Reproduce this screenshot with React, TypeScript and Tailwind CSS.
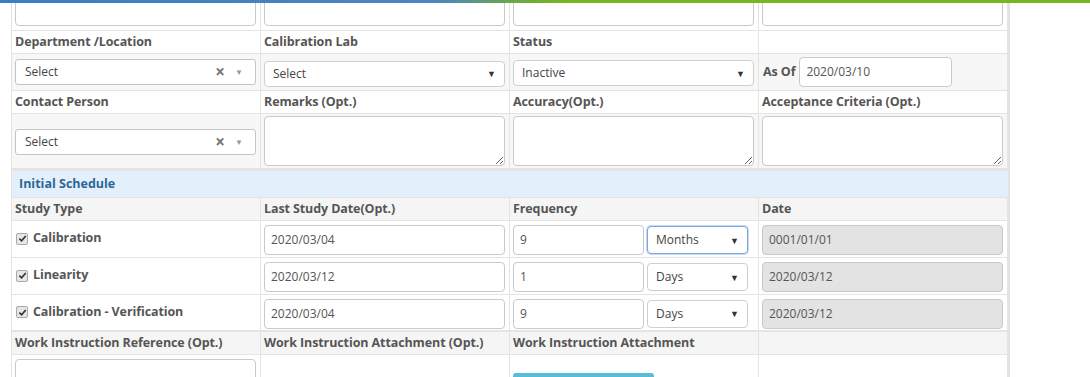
import React from 'react';

const Caret = () => <span className="text-[9px] text-[#333] leading-none">▼</span>;

const TextInput = ({ value = '', disabled = false, className = '' }: { value?: string; disabled?: boolean; className?: string }) => (
  <div
    className={`flex items-center h-[30px] px-[6px] rounded-[4px] border border-[#c9c9c9] text-[12px] text-[#555] ${
      disabled ? 'bg-[#e3e3e3]' : 'bg-white'
    } ${className}`}
  >
    {value}
  </div>
);

const NativeSelect = ({ value, focused = false, className = '' }: { value: string; focused?: boolean; className?: string }) => (
  <div
    className={`flex items-center justify-between h-[26px] pl-[8px] pr-[8px] rounded-[4px] bg-white text-[12px] text-[#444] border ${
      focused ? 'border-[#7aa6dc] shadow-[0_0_0_1px_#c7daf2]' : 'border-[#cfcfcf]'
    } ${className}`}
  >
    <span>{value}</span>
    <Caret />
  </div>
);

const Select2 = () => (
  <div className="flex items-center h-[26px] pl-[9px] pr-[12px] rounded-[3px] bg-white border border-[#c4c4c4] text-[12px] text-[#444]">
    <span className="flex-1">Select</span>
    <span className="text-[17px] font-bold text-[#777] mr-[10px] leading-none -mt-[2px]">×</span>
    <span className="text-[8px] text-[#999] leading-none">▼</span>
  </div>
);

const Area = () => (
  <textarea className="block w-full h-[50px] rounded-[4px] border border-[#c9c9c9] bg-white resize" readOnly />
);

const Check = () => (
  <span className="inline-flex items-center justify-center w-[12px] h-[12px] rounded-[2px] border border-[#a9a9a9] bg-[#e6e6e6] mr-[5px]">
    <svg width="9" height="9" viewBox="0 0 10 10">
      <path d="M1.5 5.2 L4 7.6 L8.6 2.2" fill="none" stroke="#333" strokeWidth="1.8" />
    </svg>
  </span>
);

const Cell = ({ children, className = '' }: { children?: React.ReactNode; className?: string }) => (
  <div className={`border-r border-[#e4e4e4] pl-[3px] pr-[4px] flex flex-col justify-center ${className}`}>{children}</div>
);

const Label = ({ children }: { children?: React.ReactNode }) => (
  <span className="text-[12.5px] font-bold text-[#555] tracking-[-0.1px]">{children}</span>
);

const Row = ({ children, className = '' }: { children: React.ReactNode; className?: string }) => (
  <div className={`grid grid-cols-[249px_249px_249px_249px] border-b border-[#e4e4e4] ${className}`}>{children}</div>
);

const labelRow = (labels: string[], bg = 'bg-white') => (
  <Row className={`h-[23px] ${bg}`}>
    {labels.map((l, i) => (
      <Cell key={i} className="pt-[1px]">
        <Label>{l}</Label>
      </Cell>
    ))}
  </Row>
);

const schedule = [
  { name: 'Calibration', last: '2020/03/04', freq: '9', unit: 'Months', date: '0001/01/01', focused: true },
  { name: 'Linearity', last: '2020/03/12', freq: '1', unit: 'Days', date: '2020/03/12' },
  { name: 'Calibration - Verification', last: '2020/03/04', freq: '9', unit: 'Days', date: '2020/03/12' },
];

export default function App() {
  return (
    <div className="w-[1090px] h-[377px] overflow-hidden bg-white relative" style={{ fontFamily: '"Open Sans", "Liberation Sans", sans-serif' }}>
      {/* top brand strip */}
      <div className="absolute top-0 left-0 w-full h-[3px] bg-[linear-gradient(to_right,#3c7dc0_0%,#4a86c2_40%,#6aa84a_47%,#7ab51d_52%,#7ab51d_100%)]" />

      <div className="ml-[11px] w-[999px] border-l border-r-2 border-[#e2e2e2]">
        {/* row of inputs cut off at top */}
        <Row className="h-[31px] bg-white">
          {[0, 1, 2, 3].map((i) => (
            <Cell key={i} className="!justify-end pb-[4px] overflow-hidden">
              <div className="h-[34px] shrink-0 rounded-[4px] border border-[#c9c9c9] bg-white" />
            </Cell>
          ))}
        </Row>

        {labelRow(['Department /Location', 'Calibration Lab', 'Status', ''])}

        <Row className="h-[37px] bg-[#f7f7f7]">
          <Cell>
            <Select2 />
          </Cell>
          <Cell>
            <NativeSelect value="Select" className="mt-[3px]" />
          </Cell>
          <Cell>
            <NativeSelect value="Inactive" className="mt-[2px]" />
          </Cell>
          <Cell>
            <div className="flex items-center pl-[1px]">
              <Label>As Of</Label>
              <TextInput value="2020/03/10" className="ml-[4px] w-[153px]" />
            </div>
          </Cell>
        </Row>

        {labelRow(['Contact Person', 'Remarks (Opt.)', 'Accuracy(Opt.)', 'Acceptance Criteria (Opt.)'])}

        <Row className="h-[57px] bg-[#f7f7f7] !border-b-[3px]">
          <Cell className="pt-[2px]">
            <Select2 />
          </Cell>
          <Cell>
            <Area />
          </Cell>
          <Cell>
            <Area />
          </Cell>
          <Cell>
            <Area />
          </Cell>
        </Row>

        <div className="h-[27px] bg-[#e3f0fb] flex items-center pl-[7px] pt-[1px] border-b border-[#e4e4e4]">
          <span className="text-[12.5px] font-bold text-[#2c6698]">Initial Schedule</span>
        </div>

        {labelRow(['Study Type', 'Last Study Date(Opt.)', 'Frequency', 'Date'], 'bg-[#f5f5f5]')}

        {schedule.map((s, i) => (
          <Row key={i} className={`h-[37px] bg-white ${i === schedule.length - 1 ? '!border-b-2' : ''}`}>
            <Cell>
              <div className="flex items-center pl-[1px] -mt-[1px]">
                <Check />
                <span className="text-[12.5px] font-bold text-[#555] tracking-[-0.1px]">{s.name}</span>
              </div>
            </Cell>
            <Cell>
              <TextInput value={s.last} className="mt-[2px]" />
            </Cell>
            <Cell>
              <div className="flex items-center mt-[2px]">
                <TextInput value={s.freq} className="w-[131px]" />
                <NativeSelect value={s.unit} focused={s.focused} className="ml-[3px] w-[101px] h-[28px]" />
              </div>
            </Cell>
            <Cell>
              <TextInput value={s.date} disabled className="mt-[2px]" />
            </Cell>
          </Row>
        ))}

        {labelRow(['Work Instruction Reference (Opt.)', 'Work Instruction Attachment (Opt.)', 'Work Instruction Attachment', ''], 'bg-[#f5f5f5]')}

        <Row className="h-[40px] bg-white">
          <Cell className="!justify-start pt-[4px]">
            <div className="h-[30px] rounded-[4px] border border-[#c9c9c9] bg-white" />
          </Cell>
          <Cell />
          <Cell className="!justify-start pt-[18px]">
            <div className="w-[141px] h-[30px] rounded-[3px] bg-[#55bdd6]" />
          </Cell>
          <Cell />
        </Row>
      </div>
    </div>
  );
}
